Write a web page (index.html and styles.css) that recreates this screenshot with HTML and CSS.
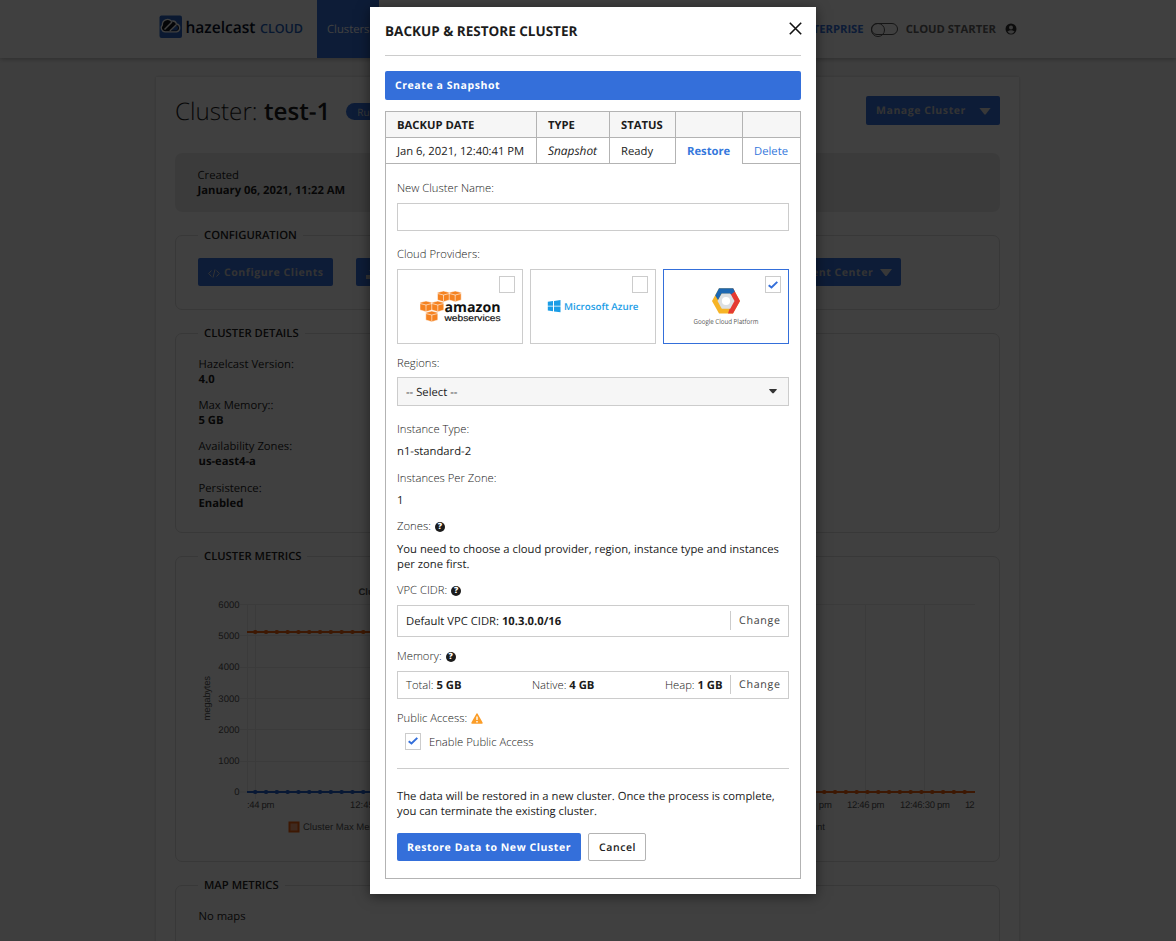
FILE: index.html
```html
<!DOCTYPE html>
<html lang="en">
<head>
<meta charset="utf-8">
<title>Hazelcast Cloud</title>
<link rel="stylesheet" href="styles.css">
</head>
<body>
<div class="page">
  <header class="topbar">
    <svg class="logo" width="146" height="24" viewBox="0 0 146 24">
      <rect x="0.500" y="0.500" width="22.500" height="22.500" rx="2" fill="#2c66c4"/>
      <path d="M6 16.800A4 4 0 0 1 3.400 10A5.200 5.200 0 0 1 12.500 6.200A4.300 4.300 0 0 1 17.600 9A4 4 0 0 1 17.600 16.800Z" fill="#10141c" stroke="#fff" stroke-width="1.300"/>
      <path d="M5.500 14.500L13 7" stroke="#fff" stroke-width="1.500"/>
      <path d="M12 15.500L17 10.300Q20.500 12 18 15.500Z" fill="#2c66c4"/>
      <path d="M10.800 16L17.500 9.500" stroke="#fff" stroke-width="1.300"/>
      <text x="26.500" y="18" font-family="Open Sans" font-size="16" font-weight="600" fill="#081028" textLength="70" lengthAdjust="spacingAndGlyphs">hazelcast</text>
      <text x="101" y="18" font-family="Open Sans" font-size="12.500" font-weight="600" fill="#2160c0" textLength="43" lengthAdjust="spacingAndGlyphs">CLOUD</text>
    </svg>
    <nav class="nav"><span class="tab">Clusters</span></nav>
    <div class="plan">
      <span class="plan-on">CLOUD ENTERPRISE</span>
      <span class="toggle"></span>
      <span class="plan-off">CLOUD STARTER</span>
      <svg width="12" height="12" viewBox="0 0 12 12"><circle cx="6" cy="6" r="5.500" fill="#333"/><circle cx="6" cy="4.500" r="2" fill="#eee"/><path d="M2.500 8.500Q6 6 9.500 8.500Q8 10.700 6 10.700T2.500 8.500" fill="#eee"/></svg>
    </div>
  </header>

  <main class="card">
    <div class="title-row">
      <h1 class="title">Cluster: <b>test-1</b></h1>
      <span class="pill">Running</span>
      <span class="btn manage">Manage Cluster <i class="caret"></i></span>
    </div>
    <div class="created"><span>Created</span><b>January 06, 2021, 11:22 AM</b></div>

    <fieldset class="box box-config">
      <legend>CONFIGURATION</legend>
      <div class="config">
        <span class="btn clients"><svg width="12" height="9" viewBox="0 0 12 9" fill="none" stroke="#ccc"><path d="M3.500 1.500L0.700 4.500L3.500 7.500M8.500 1.500L11.300 4.500L8.500 7.500M7 0.500L5 8.500"/></svg>Configure Clients</span>
        <span class="btn upload"><svg width="13" height="12" viewBox="0 0 13 12" fill="#ccc"><path d="M6.500 0L10 4H8V8H5V4H3ZM0 8H4V9.500H9V8H13V12H0Z"/></svg></span>
        <span class="btn center">Management Center <i class="caret"></i></span>
      </div>
    </fieldset>

    <fieldset class="box box-details">
      <legend>CLUSTER DETAILS</legend>
      <dl class="details">
        <div><dt>Hazelcast Version:</dt><dd>4.0</dd></div>
        <div><dt>Max Memory::</dt><dd>5 GB</dd></div>
        <div><dt>Availability Zones:</dt><dd>us-east4-a</dd></div>
        <div><dt>Persistence:</dt><dd>Enabled</dd></div>
      </dl>
    </fieldset>

    <fieldset class="box box-metrics">
      <legend>CLUSTER METRICS</legend>
      <svg class="chart" width="800" height="260" viewBox="198 580 800 260">
        <g stroke="#e9e9e9" stroke-width="1">
          <path d="M240 604.500H975M240 635.500H600M240 667.500H600M240 698.500H600M240 729.500H600M240 761.500H600M240 792H975M247.500 604V792M255.500 604V799M865.500 604V799M924.500 604V799"/>
        </g>
        <path d="M247 632H590" stroke="#f4620c" stroke-width="2"/>
        <path d="M255 632H590" stroke="#f4620c" stroke-width="4" stroke-linecap="round" stroke-dasharray="0.500 10.300"/>
        <path d="M247 792H590" stroke="#2160d0" stroke-width="2"/>
        <path d="M255 792H590" stroke="#2160d0" stroke-width="4" stroke-linecap="round" stroke-dasharray="0.500 10.300"/>
        <path d="M590 792H975" stroke="#f4620c" stroke-width="2"/>
        <path d="M824 792H970" stroke="#f4620c" stroke-width="4" stroke-linecap="round" stroke-dasharray="0.500 10.300"/>
        <g class="ticks">
          <text x="239.500" y="608" text-anchor="end">6000</text>
          <text x="239.500" y="639" text-anchor="end">5000</text>
          <text x="239.500" y="670" text-anchor="end">4000</text>
          <text x="239.500" y="701.500" text-anchor="end">3000</text>
          <text x="239.500" y="732.500" text-anchor="end">2000</text>
          <text x="239.500" y="764" text-anchor="end">1000</text>
          <text x="239.500" y="795" text-anchor="end">0</text>
          <text x="247" y="808" textLength="27.500">:44 pm</text>
          <text x="350" y="808">12:45 pm</text>
          <text x="832" y="808" text-anchor="end">12:45:30 pm</text>
          <text x="847" y="808" textLength="37.500">12:46 pm</text>
          <text x="900" y="808" textLength="50">12:46:30 pm</text>
          <text x="965" y="808" textLength="9.500">12</text>
          <text transform="translate(209.500 720.500) rotate(-90)" textLength="44.500">megabytes</text>
          <text x="303" y="830">Cluster Max Memory</text>
          <text x="825" y="830" text-anchor="end">Client Count</text>
          <text x="358.500" y="594.500" font-weight="700">Cluster</text>
        </g>
        <rect x="289.500" y="822.500" width="9" height="9" fill="#f9a67c" stroke="#f4620c" stroke-width="2"/>
      </svg>
    </fieldset>

    <fieldset class="box box-map">
      <legend>MAP METRICS</legend>
      <p class="nomaps">No maps</p>
    </fieldset>
  </main>
</div>

<div class="overlay">
  <section class="modal">
    <div class="modal-head">
      <h2>BACKUP &amp; RESTORE CLUSTER</h2>
      <svg width="13" height="13" viewBox="0 0 13 13"><path d="M0.800 0.800L12.200 12.200M12.200 0.800L0.800 12.200" stroke="#111" stroke-width="1.600"/></svg>
    </div>
    <span class="btn create">Create a Snapshot</span>
    <div class="table">
      <div class="th">BACKUP DATE</div><div class="th">TYPE</div><div class="th">STATUS</div><div class="th"></div><div class="th"></div>
      <div class="td date">Jan 6, 2021, 12:40:41 PM</div><div class="td"><em>Snapshot</em></div><div class="td">Ready</div><div class="td restore">Restore</div><div class="td delete">Delete</div>
    </div>
    <div class="panel">
      <div class="label">New Cluster Name:</div>
      <div class="input"></div>
      <div class="label providers-label">Cloud Providers:</div>
      <div class="providers">
        <div class="provider">
          <span class="check"></span>
          <svg width="124" height="73" viewBox="398 270 124 73">
            <g fill="#f58220" stroke="#fff" stroke-width="0.500">
              <path id="cube" d="M437.500 292.500L443.500 291L449.500 292.500V300L443.500 301.700L437.500 300Z"/>
              <use href="#cube" x="11.700"/><use href="#cube" x="-17.500" y="10"/><use href="#cube" x="-5.700" y="10"/><use href="#cube" x="-11.700" y="20"/>
            </g>
            <g fill="none" stroke="#fff" stroke-width="0.600">
              <path id="edge" d="M437.500 293.500L443.500 295L449.500 293.500M443.500 295V301"/>
              <use href="#edge" x="11.700"/><use href="#edge" x="-17.500" y="10"/><use href="#edge" x="-5.700" y="10"/><use href="#edge" x="-11.700" y="20"/>
            </g>
            <text x="444.500" y="311.500" font-family="Open Sans" font-weight="700" font-size="14" fill="#111" textLength="56" lengthAdjust="spacingAndGlyphs">amazon</text>
            <text x="444.500" y="320.500" font-family="Liberation Sans" font-size="9" fill="#111" stroke="#111" stroke-width="0.200" textLength="56" lengthAdjust="spacingAndGlyphs">webservices</text>
          </svg>
        </div>
        <div class="provider">
          <span class="check"></span>
          <svg width="124" height="73" viewBox="531 270 124 73">
            <path d="M547.800 301.800L553 301.100V305.700H547.800ZM554 301L560.500 300.100V305.700H554ZM547.800 306.600H553V311.300L547.800 310.600ZM554 306.600H560.500V312.200L554 311.400Z" fill="#1b9de6"/>
            <text x="564" y="310" font-family="Open Sans" font-weight="600" font-size="9.500" fill="#1b9de6" textLength="74.500" lengthAdjust="spacingAndGlyphs">Microsoft Azure</text>
          </svg>
        </div>
        <div class="provider selected">
          <span class="check"><svg width="10" height="8" viewBox="0 0 10 8"><path d="M0.700 4.200L3.500 6.500L9.300 0.900" fill="none" stroke="#346fda" stroke-width="2"/></svg></span>
          <svg width="124" height="73" viewBox="664 270 124 73">
            <path d="M712 301L719 288.300H733L740 301L733 313.500H719Z" fill="#f6b426"/>
            <path d="M733 288.300L740 301L733 313.500H728L729.500 309L733.500 301L730 294.500Z" fill="#e53a33"/>
            <path d="M717.500 301L721.800 293.300H730.200L734.500 301L730.200 308.700H721.800Z" fill="#dcdfe2"/>
            <path d="M715.200 295.400L719 288.300H733.100L734.800 291.500L731 294.500L730.200 293.500H721.600L718 299.900Z" fill="#1c67b2"/>
            <circle cx="726" cy="301" r="4.100" fill="#fff"/>
            <text x="693.500" y="323.500" font-family="Open Sans" font-size="7" fill="#555" textLength="65" lengthAdjust="spacingAndGlyphs">Google Cloud Platform</text>
          </svg>
        </div>
      </div>
      <div class="label regions-label">Regions:</div>
      <div class="select"><span>-- Select --</span><svg width="8" height="5" viewBox="0 0 8 5"><path d="M0.300 0H7.700V0.800L4.600 4.300H3.400L0.300 0.800Z" fill="#333"/></svg></div>
      <div class="label type-label">Instance Type:</div>
      <div class="value">n1-standard-2</div>
      <div class="label per-label">Instances Per Zone:</div>
      <div class="value">1</div>
      <div class="label zones-label">Zones:<i class="help">?</i></div>
      <p class="text zones-text">You need to choose a cloud provider, region, instance type and instances<br>per zone first.</p>
      <div class="label vpc-label">VPC CIDR:<i class="help">?</i></div>
      <div class="row vpc"><div class="cidr">Default VPC CIDR: <b>10.3.0.0/16</b></div><span class="change">Change</span></div>
      <div class="label mem-label">Memory:<i class="help">?</i></div>
      <div class="row mem"><div class="mem-items"><span>Total: <b>5 GB</b></span><span>Native: <b>4 GB</b></span><span>Heap: <b>1 GB</b></span></div><span class="change">Change</span></div>
      <div class="label pub-label">Public Access:<svg class="warn" width="12" height="11" viewBox="0 0 12 11"><path d="M6 0.300Q6.500 0.300 6.800 0.900L11.600 9.500Q12 10.700 10.900 10.700H1.100Q0 10.700 0.400 9.500L5.200 0.900Q5.500 0.300 6 0.300Z" fill="#fb9d28"/><path d="M6 3.500V7M6 8V9.400" stroke="#fff" stroke-width="1.400"/></svg></div>
      <div class="enable"><span class="check"><svg width="10" height="8" viewBox="0 0 10 8"><path d="M0.700 4.200L3.500 6.500L9.300 0.900" fill="none" stroke="#346fda" stroke-width="2"/></svg></span><span class="enable-text">Enable Public Access</span></div>
      <hr class="rule">
      <p class="text note">The data will be restored in a new cluster. Once the process is complete,<br>you can terminate the existing cluster.</p>
      <div class="actions"><span class="btn primary">Restore Data to New Cluster</span><span class="btn cancel">Cancel</span></div>
    </div>
  </section>
</div>
</body>
</html>
```
FILE: styles.css
```css
* { box-sizing: border-box; }
html, body { height: 100%; overflow: hidden; }
body { margin: 0; background: #f8f8f8; color: #1c1c1c; font: 11.250px/15px "Open Sans", sans-serif; text-rendering: geometricPrecision; }
h1, h2, p, dl, dd { margin: 0; }
svg { flex: none; }

.page { height: 941px; overflow: hidden; }
.topbar { position: relative; display: flex; align-items: center; height: 58px; padding: 0 159px; background: #fff; box-shadow: 0 1px 5px rgba(0, 0, 0, .3); }
.logo { margin-bottom: 5px; }
.nav { align-self: stretch; margin-left: 12px; }
.tab { display: flex; align-items: center; width: 62px; height: 58px; padding-left: 10px; background: #346fda; color: #fff; }
.plan { display: flex; align-items: center; margin-left: auto; height: 54px; font-weight: 700; white-space: nowrap; }
.plan-on { color: #346fda; }
.toggle { width: 27px; height: 12px; margin: 0 8px 0 7px; border: 1px solid #555; border-radius: 6px; }
.toggle::before { content: ""; display: block; width: 12px; height: 12px; margin: -1px; border: 1px solid #555; border-radius: 50%; }
.plan-off { margin-right: 9px; color: #666; }

.card { width: 863px; height: 900px; margin: 19px 0 0 156px; padding: 19px 19px 0; background: #fff; box-shadow: 0 0 3px rgba(0, 0, 0, .2); }
.title-row { display: flex; align-items: center; height: 29px; }
.title { padding-top: 2px; font-size: 24.200px; line-height: 30px; font-weight: 300; white-space: nowrap; }
.title b { font-weight: 600; }
.pill { margin: 1px 0 0 16px; padding: 0 11px; border-radius: 9px; background: #346fda; color: #ddd; font-size: 10px; line-height: 18px; height: 17px; }
.btn { display: flex; align-items: center; height: 28px; padding: 2px 10px 0; border-radius: 2px; background: #346fda; color: #fff; font-size: 10.500px; font-weight: 700; letter-spacing: .570px; white-space: nowrap; }
.page .btn { color: #ccc; }
.manage { height: 29px; width: 134px; margin-left: auto; }
.caret { flex: none; width: 12px; height: 7px; margin: -1px -1px 0 auto; background: #ddd; clip-path: polygon(0 0, 100% 0, 55% 100%, 45% 100%); }
.created { display: flex; flex-direction: column; justify-content: center; height: 59px; margin-top: 28px; padding: 1px 0 0 22.500px; border-radius: 7px; background: #ececec; }
.box { min-width: 0; margin: 0 0 15px; padding: 0 22px; border: 1px solid #ddd; border-radius: 7px; }
.box legend { height: 16px; padding: 0 6px; font-weight: 600; line-height: 18px; color: #222; }
.box-config { height: 83px; margin-top: 15px; }
.box-details { height: 208px; }
.box-metrics { height: 314px; }
.box-map { height: 100px; }
.config { display: flex; padding-top: 15px; }
.clients { width: 135px; }
.clients svg { margin-right: 4px; }
.upload { width: 140px; margin-left: 23px; }
.center { width: 155px; margin-left: 250px; }
.details { display: grid; gap: 11.200px; padding: 16px 0 0 .500px; }
.details dd, .created b { font-weight: 700; }
.chart { display: block; margin-top: 16px; }
.ticks { font: 9.500px "Liberation Sans", sans-serif; fill: #555; }
.nomaps { padding: 16px 0 0 .500px; }

.overlay { position: absolute; inset: 0; background: rgba(0, 0, 0, .75); }
.modal { width: 446px; height: 887px; margin: 7px 0 0 370px; padding: 0 15px 15px; background: #fff; box-shadow: 0 2px 12px rgba(0, 0, 0, .5); }
.modal-head { display: flex; align-items: center; justify-content: space-between; height: 49px; margin-bottom: 15px; border-bottom: 1px solid #ccc; }
.modal-head h2 { font-size: 13.500px; font-weight: 700; }
.modal-head svg { margin: 0 -1px 6px 0; }
.create { height: 29px; margin-bottom: 11px; }
.table { display: grid; grid-template-columns: 151px 73px 66px 67px 59px; grid-template-rows: 26px 27px; }
.th, .td { padding-left: 11px; border: 0 solid #b3b3b3; border-width: 1px 0 0 1px; line-height: 28px; white-space: nowrap; }
.th { background: #f6f6f6; font-weight: 700; }
.td { border-bottom-width: 1px; }
.td em { font-size: 11.900px; line-height: 15px; }
.th:nth-child(5n), .td:nth-child(5n) { border-right-width: 1px; }
.restore { border-bottom-width: 0; color: #3578dc; font-weight: 700; }
.delete { color: #3578dc; }
.panel { height: 715px; padding: 16px 11px 0; border: 1px solid #b3b3b3; border-top: 0; }
.label { display: flex; align-items: center; height: 16px; padding-top: 2px; line-height: 16px; font-weight: 300; }
.value { height: 16px; margin-top: 6px; line-height: 18px; }
.input { height: 28px; margin-top: 7px; border: 1px solid #ccc; }
.providers-label { margin-top: 15px; }
.providers { display: grid; grid-template-columns: repeat(3, 126px); gap: 7px; margin-top: 7px; }
.provider { position: relative; height: 75px; border: 1px solid #ccc; }
.selected { border-color: #346fda; }
.check { display: flex; align-items: center; justify-content: center; width: 16px; height: 17px; border: 1px solid #ccc; background: #fff; }
.provider .check { position: absolute; top: 6px; right: 7px; }
.regions-label { margin-top: 11px; }
.select { display: flex; align-items: center; justify-content: space-between; height: 29px; margin-top: 6px; padding: 0 11px 0 8px; border: 1px solid #ccc; background: #f6f6f6; }
.select span, .cidr, .enable-text { padding-top: 2px; }
.type-label { margin-top: 15px; }
.per-label { margin-top: 11px; }
.zones-label { margin-top: 10px; }
.text { white-space: nowrap; }
.zones-text { margin-top: 8px; }
.vpc-label { margin-top: 10px; }
.help { width: 10px; height: 10px; margin: -1px 0 0 4px; border-radius: 50%; background: #1c1c1c; color: #fff; font: 800 8.500px/10px "Open Sans", sans-serif; text-align: center; }
.row { display: flex; align-items: center; justify-content: space-between; margin-top: 7px; padding: 0 0 1px 8px; border: 1px solid #ccc; }
.vpc { height: 32px; }
.mem { height: 28px; font-weight: 300; }
.mem b { font-weight: 700; }
.mem-items { display: flex; flex: 1; justify-content: space-between; padding: 2px 7.500px 0 0; }
.change { width: 58px; height: 19px; padding-left: 8px; border-left: 1px solid #ccc; line-height: 20px; font-size: 10.700px; font-weight: 400; letter-spacing: .700px; color: #444; }
.mem-label, .pub-label { margin-top: 11px; }
.warn { margin: -2px 0 0 4px; }
.enable { display: flex; align-items: center; gap: 8px; height: 16px; margin: 7px 0 0 8px; font-weight: 300; }
.rule { height: 1px; margin: 19px 0 0; border: 0; background: #ccc; }
.note { margin-top: 20px; }
.actions { display: flex; gap: 7px; margin-top: 14px; }
.primary { width: 184px; }
.cancel { width: 58px; border: 1px solid #b3b3b3; background: #fff; color: #222; font-weight: 600; }
```
